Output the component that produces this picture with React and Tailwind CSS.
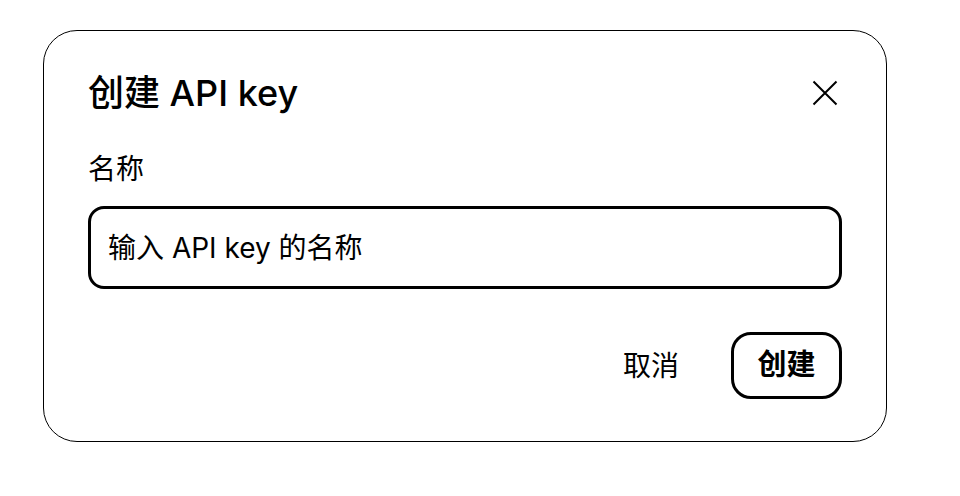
import React from "react";

const FONT = "font-['Inter','Noto_Sans_CJK_SC',sans-serif]";

const CloseIcon = () => (
  <svg width="26" height="26" viewBox="0 0 26 26" fill="none" aria-hidden="true">
    <path d="M1.5 1.5L24.5 24.5M24.5 1.5L1.5 24.5" stroke="black" strokeWidth="2" />
  </svg>
);

export default function App() {
  return (
    <div className={`min-h-[496px] w-[960px] bg-white text-black ${FONT}`}>
      <div className="ml-[43px] pt-[30px]">
        <div className="flex h-[412px] w-[844px] flex-col rounded-[34px] border border-black px-[44px] pt-[38px]">
          <div className="flex h-[48px] items-center justify-between">
            <h1 className="text-[36px] leading-[48px] font-medium">创建 API key</h1>
            <button className="mr-[4px] flex items-center justify-center" aria-label="关闭">
              <CloseIcon />
            </button>
          </div>

          <label className="mt-[32px] text-[28px] leading-[40px]">名称</label>

          <div className="mt-[17px] flex h-[83px] items-center rounded-[16px] border-[3px] border-black px-[17px]">
            <span className="text-[28px] leading-[40px]">输入 API key 的名称</span>
          </div>

          <div className="mt-[43px] flex items-center justify-end gap-[52px]">
            <button className="text-[28px] leading-[40px]">取消</button>
            <button className="flex h-[67px] w-[111px] items-center justify-center rounded-[20px] border-[3px] border-black pb-[2px] text-[29px] leading-[40px] font-bold">
              创建
            </button>
          </div>
        </div>
      </div>
    </div>
  );
}
